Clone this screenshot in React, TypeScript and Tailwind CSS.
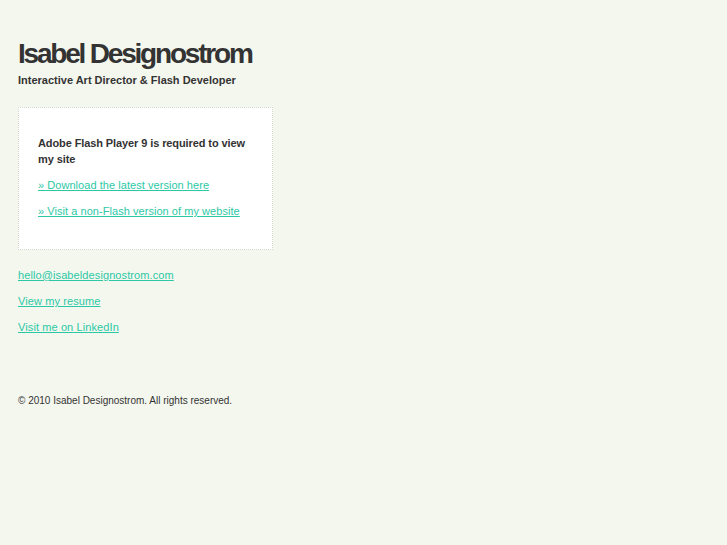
import React from "react";

export default function App() {
  const font = { fontFamily: '"Liberation Sans", Arial, Helvetica, sans-serif' };
  return (
    <div className="min-h-[545px] w-full bg-[#f4f7ee] text-[#333333]" style={font}>
      <div className="flex flex-col pl-[18px] pt-[38px]">
        <h1 className="text-[28px] leading-[32px] font-bold tracking-[-2.2px] text-[#333333]">
          Isabel Designostrom
        </h1>
        <p className="mt-[2px] text-[11px] leading-[16px] font-bold tracking-[0px]">
          Interactive Art Director &amp; Flash Developer
        </p>
        <div className="mt-[19px] w-[255px] h-[143px] border border-dotted border-[#d3d6cc] bg-white pl-[19px] pt-[27px]">
          <p className="text-[11px] leading-[16px] font-bold tracking-[-0.1px] w-[215px]">
            Adobe Flash Player 9 is required to view my site
          </p>
          <p className="mt-[10px] text-[11px] leading-[16px] tracking-[0.05px]">
            <a href="#" className="text-[#2cc8a6] underline">» Download the latest version here</a>
          </p>
          <p className="mt-[10px] text-[11px] leading-[16px] tracking-[0.05px]">
            <a href="#" className="text-[#2cc8a6] underline">» Visit a non-Flash version of my website</a>
          </p>
        </div>
        <div className="mt-[17px] flex flex-col gap-[10px] text-[11px] leading-[16px] tracking-[0.1px]">
          <a href="#" className="text-[#2cc8a6] underline w-fit">hello@isabeldesignostrom.com</a>
          <a href="#" className="text-[#2cc8a6] underline w-fit">View my resume</a>
          <a href="#" className="text-[#2cc8a6] underline w-fit">Visit me on LinkedIn</a>
        </div>
        <p className="mt-[58px] text-[10px] leading-[16px] text-[#333333]">
          © 2010 Isabel Designostrom. All rights reserved.
        </p>
      </div>
    </div>
  );
}
